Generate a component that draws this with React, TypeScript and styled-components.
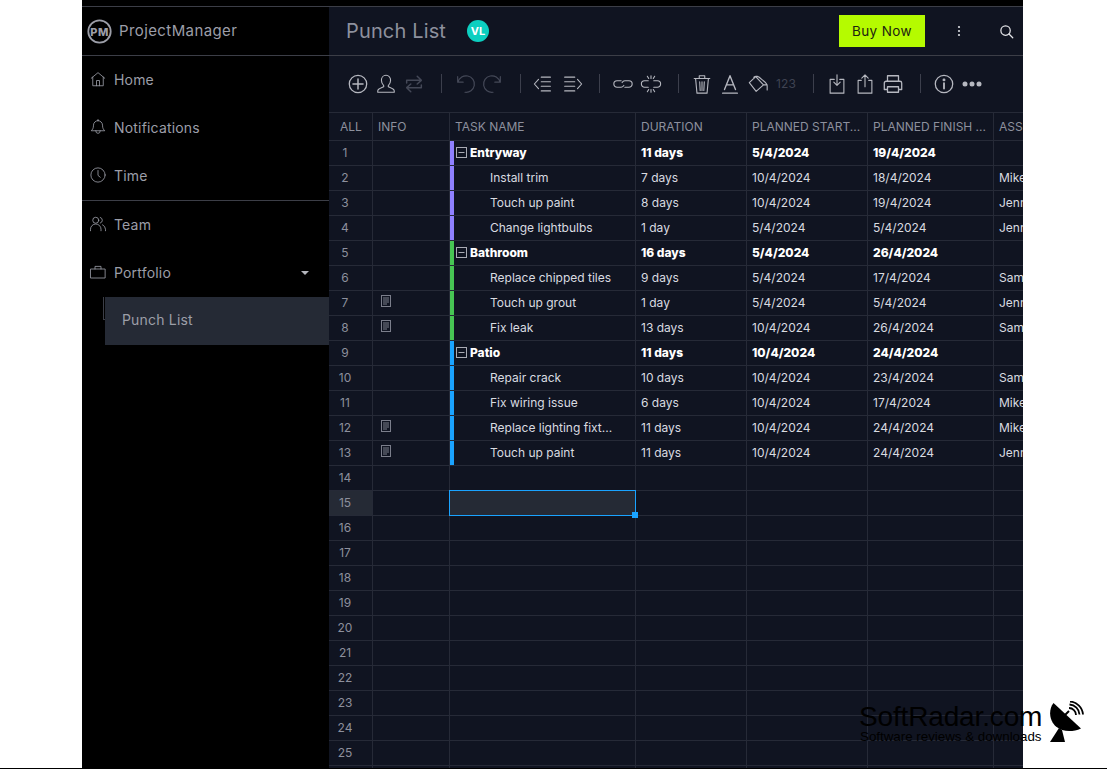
import React from "react";
import styled, { createGlobalStyle } from "styled-components";

const Global = createGlobalStyle`
  html, body { margin: 0; padding: 0; background: #fff; overflow: hidden; }
  body { font-family: Inter, "Liberation Sans", sans-serif; }
  #root { width: 1107px; height: 769px; }
`;

const Page = styled.div`
  position: relative;
  width: 1107px;
  height: 769px;
  overflow: hidden;
  background: #fff;
  border-bottom: 1px solid #000;
  box-sizing: border-box;
`;
const Frame = styled.div`
  margin-left: 82px;
  width: 941px;
  height: 768px;
  display: flex;
  flex-direction: column;
  background: #000;
  overflow: hidden;
`;
const TopBand = styled.div`
  height: 6px;
  flex: none;
  background: #000;
  border-bottom: 1px solid #3c3e47;
`;
const Body = styled.div`
  flex: 1;
  min-height: 0;
  display: flex;
`;
const Sidebar = styled.aside`
  width: 247px;
  flex: none;
  background: #000;
  color: #9c9ea8;
`;
const Brand = styled.div`
  height: 48px;
  box-sizing: content-box;
  border-bottom: 1px solid #3c3e47;
  display: flex;
  align-items: center;
  gap: 7px;
  padding-left: 5px;
  font-size: 15px;
  letter-spacing: 0.4px;
  color: #9c9ea8;
  & > span { margin-top: -1px; }
`;
const NavGroup = styled.nav`
  border-bottom: 1px solid #3c3e47;
`;
const NavItem = styled.div`
  height: 48px;
  box-sizing: border-box;
  display: flex;
  align-items: center;
  padding: 0 0 2px 7px;
  gap: 7px;
  font-size: 14px;
  letter-spacing: 0.18px;
  position: relative;
`;
const Caret = styled.span`
  position: absolute;
  left: 219px;
  top: 22px;
  width: 0;
  height: 0;
  border-left: 4px solid transparent;
  border-right: 4px solid transparent;
  border-top: 4px solid #b4b6bd;
`;
const SubWrap = styled.div`
  position: relative;
  height: 48px;
  box-sizing: border-box;
  margin-left: 23px;
  background: #252a35;
  display: flex;
  align-items: center;
  padding: 0 0 3px 17px;
  font-size: 14px;
  letter-spacing: 0.18px;
  color: #9c9ea8;
`;
const SubTree = styled.span`
  position: absolute;
  left: -2px;
  top: 0;
  width: 2px;
  height: 23px;
  border-left: 1px solid #3c3e47;
  border-bottom: 1px solid #3c3e47;
  box-sizing: border-box;
`;
const Main = styled.main`
  flex: 1;
  min-width: 0;
  background: #101421;
  display: flex;
  flex-direction: column;
`;
const Header = styled.header`
  height: 48px;
  flex: none;
  border-bottom: 1px solid #3c3e47;
  display: flex;
  align-items: center;
  padding-left: 17px;
`;
const Title = styled.h1`
  margin: 0;
  font-size: 20px;
  font-weight: 400;
  letter-spacing: 0.15px;
  color: #8d909d;
`;
const Avatar = styled.span`
  margin-left: 21px;
  width: 22px;
  height: 22px;
  border-radius: 50%;
  background: #0ccfc0;
  color: #fff;
  font-size: 11px;
  font-weight: 700;
  display: flex;
  align-items: center;
  justify-content: center;
`;
const BuyButton = styled.button`
  margin-left: auto;
  width: 86px;
  height: 32px;
  border: none;
  background: #b5fb00;
  color: #1d2410;
  font: 400 13.5px Inter, sans-serif;
  letter-spacing: 0.4px;
  padding: 0;
`;
const MenuSlot = styled.span`
  width: 68px;
  display: flex;
  justify-content: center;
  align-items: center;
`;
const SearchSlot = styled.span`
  width: 26px;
  margin-right: 4px;
  display: flex;
  justify-content: center;
  align-items: center;
`;
const Toolbar = styled.div`
  height: 56px;
  box-sizing: border-box;
  flex: none;
  display: flex;
  align-items: center;
  padding: 0 0 1px 15px;
`;
const Tool = styled.span`
  width: 28px;
  height: 28px;
  flex: none;
  display: flex;
  align-items: center;
  justify-content: center;
`;
const ToolText = styled(Tool)`
  font-size: 12px;
  color: #3f4352;
  letter-spacing: 0.2px;
`;
const Sep = styled.span`
  width: 1px;
  height: 19px;
  flex: none;
  background: #3c3f4c;
  margin: 0 9px 0 13px;
`;
const Grid = styled.div`
  flex: 1;
  min-height: 0;
  overflow: hidden;
  border-top: 1px solid #262a37;
`;
const Row = styled.div<{ $head?: boolean }>`
  display: grid;
  grid-template-columns: 44px 77px 186px 111px 121px 126px 29px;
  height: ${(p) => (p.$head ? 28 : 25)}px;
  box-sizing: border-box;
  border-bottom: 1px solid #262a37;
`;
const Cell = styled.div<{ $bold?: boolean }>`
  position: relative;
  border-right: 1px solid #262a37;
  display: flex;
  align-items: center;
  padding: 0 0 1px 5px;
  font-size: 12px;
  font-weight: ${(p) => (p.$bold ? 800 : 400)};
  color: ${(p) => (p.$bold ? "#ffffff" : "#d9dbe0")};
  white-space: nowrap;
  overflow: hidden;
  min-width: 0;
`;
const LastCell = styled(Cell)`
  border-right: none;
`;
const HeadCell = styled.div<{ $pad?: number; $last?: boolean }>`
  border-right: ${(p) => (p.$last ? "none" : "1px solid #262a37")};
  display: flex;
  align-items: center;
  padding-left: ${(p) => p.$pad ?? 5}px;
  font-size: 12px;
  color: #8d909d;
  white-space: nowrap;
  overflow: hidden;
`;
const NumCell = styled.div<{ $active?: boolean }>`
  border-right: 1px solid #262a37;
  display: flex;
  align-items: center;
  padding: 0 0 1px 6px;
  font-size: 12px;
  color: #8d909d;
  background: ${(p) => (p.$active ? "#252a35" : "transparent")};
`;
const NumText = styled.span`
  width: 20px;
  text-align: center;
`;
const InfoCell = styled(Cell)`
  padding: 0 0 5px 8px;
`;
const TaskCell = styled(Cell)<{ $child?: boolean }>`
  padding-left: ${(p) => (p.$child ? 40 : 6)}px;
  gap: 3px;
`;
const Bar = styled.span<{ $color: string }>`
  position: absolute;
  left: 0;
  top: 0;
  bottom: 0;
  width: 4px;
  background: ${(p) => p.$color};
`;
const Selected = styled.span`
  position: absolute;
  left: 449px;
  top: 490px;
  width: 187px;
  height: 26px;
  box-sizing: border-box;
  background: #252a35;
  border: 1px solid #1aa3ff;
  pointer-events: none;
`;
const Handle = styled.span`
  position: absolute;
  left: 632px;
  top: 512px;
  width: 6px;
  height: 6px;
  background: #1aa3ff;
`;
const Watermark = styled.div`
  position: absolute;
  left: 859px;
  top: 703px;
  color: #000;
  font-family: "Liberation Sans", Arial, sans-serif;
`;
const WmTitle = styled.div`
  font-size: 28px;
  line-height: 28px;
  letter-spacing: -0.15px;
`;
const WmSub = styled.div`
  font-size: 13.33px;
  line-height: 12px;
  margin-left: 1px;
`;
const WmIcon = styled.svg`
  position: absolute;
  left: 1049px;
  top: 701px;
`;

const S = (p: React.SVGProps<SVGSVGElement> & { s?: number }) => {
  const { s = 22, children, ...rest } = p;
  return (
    <svg width={s} height={s} viewBox="0 0 24 24" fill="none" stroke="currentColor" strokeWidth={1.2} strokeLinecap="round" strokeLinejoin="round" {...rest}>
      {children}
    </svg>
  );
};
const on = "#b6b8c0";
const off = "#444857";

const NavIcon = ({ children }: { children: React.ReactNode }) => (
  <S s={18} stroke="#9c9ea8" strokeWidth={1.1}>{children}</S>
);

const PmLogo = () => (
  <svg width="25" height="25" viewBox="0 0 25 25">
    <circle cx="12.5" cy="12.5" r="11.2" fill="none" stroke="#9c9ea8" strokeWidth="1.8" />
    <text x="12.5" y="16.5" textAnchor="middle" fontSize="11" fontWeight="800" fill="#9c9ea8" fontFamily="Inter, sans-serif">PM</text>
  </svg>
);

const NoteIcon = () => (
  <svg width="10" height="12" viewBox="0 0 10 12" fill="none" stroke="#7b7e8b" strokeWidth="1">
    <rect x="0.5" y="0.5" width="9" height="11" />
    <path d="M2 3h6M2 5h6M2 7h6M2 9h4" />
  </svg>
);
const Collapse = () => (
  <svg width="11" height="11" viewBox="0 0 11 11" fill="none" stroke="#a9abb4" strokeWidth="1" style={{ flex: "none" }}>
    <rect x="0.5" y="0.5" width="10" height="10" />
    <path d="M2.5 5.5h6" />
  </svg>
);

type T = { task: string; dur: string; start: string; end: string; who: string; bar: string; parent?: boolean; note?: boolean };
const P = "#8f80ff", G = "#47c553", B = "#1aa3ff";
const rows: T[] = [
  { task: "Entryway", dur: "11 days", start: "5/4/2024", end: "19/4/2024", who: "", bar: P, parent: true },
  { task: "Install trim", dur: "7 days", start: "10/4/2024", end: "18/4/2024", who: "Mike Smith", bar: P },
  { task: "Touch up paint", dur: "8 days", start: "10/4/2024", end: "19/4/2024", who: "Jennifer", bar: P },
  { task: "Change lightbulbs", dur: "1 day", start: "5/4/2024", end: "5/4/2024", who: "Jennifer", bar: P },
  { task: "Bathroom", dur: "16 days", start: "5/4/2024", end: "26/4/2024", who: "", bar: G, parent: true },
  { task: "Replace chipped tiles", dur: "9 days", start: "5/4/2024", end: "17/4/2024", who: "Sam", bar: G },
  { task: "Touch up grout", dur: "1 day", start: "5/4/2024", end: "5/4/2024", who: "Jennifer", bar: G, note: true },
  { task: "Fix leak", dur: "13 days", start: "10/4/2024", end: "26/4/2024", who: "Sam", bar: G, note: true },
  { task: "Patio", dur: "11 days", start: "10/4/2024", end: "24/4/2024", who: "", bar: B, parent: true },
  { task: "Repair crack", dur: "10 days", start: "10/4/2024", end: "23/4/2024", who: "Sam", bar: B },
  { task: "Fix wiring issue", dur: "6 days", start: "10/4/2024", end: "17/4/2024", who: "Mike Smith", bar: B },
  { task: "Replace lighting fixt...", dur: "11 days", start: "10/4/2024", end: "24/4/2024", who: "Mike Smith", bar: B, note: true },
  { task: "Touch up paint", dur: "11 days", start: "10/4/2024", end: "24/4/2024", who: "Jennifer", bar: B, note: true },
];
const blank = Array.from({ length: 13 }, (_, i) => i + 14);

export default function App() {
  return (
    <Page>
      <Global />
      <Frame>
        <TopBand />
        <Body>
          <Sidebar>
            <Brand><PmLogo /><span>ProjectManager</span></Brand>
            <NavGroup>
              <NavItem>
                <NavIcon><path d="M3 11 12 3.500 21 11M5 9.500V21h14V9.500M10 21v-7h4v7" /></NavIcon>Home
              </NavItem>
              <NavItem>
                <NavIcon><path d="M12 3.500a6 6 0 0 0-6 6c0 4.500-1.500 6-3 7.500h18c-1.500-1.500-3-3-3-7.500a6 6 0 0 0-6-6ZM9 17a3 3.500 0 0 0 6 0M12 3.500V2" /></NavIcon>Notifications
              </NavItem>
              <NavItem>
                <NavIcon><circle cx="12" cy="12" r="9.500" /><path d="M12 6v6.500l3 2.500" /></NavIcon>Time
              </NavItem>
            </NavGroup>
            <NavItem>
              <NavIcon><circle cx="9" cy="7" r="4" /><path d="M2 21v-2a7 7 0 0 1 14 0v2M15 3.200a4 4 0 0 1 0 7.600M18 13a7 7 0 0 1 4 6v2" /></NavIcon>Team
            </NavItem>
            <NavItem>
              <NavIcon><rect x="2.500" y="8" width="19" height="12" /><path d="M8 8V4.500h8V8" /></NavIcon>Portfolio
              <Caret />
            </NavItem>
            <SubWrap><SubTree />Punch List</SubWrap>
          </Sidebar>
          <Main>
            <Header>
              <Title>Punch List</Title>
              <Avatar>VL</Avatar>
              <BuyButton>Buy Now</BuyButton>
              <MenuSlot>
                <svg width="4" height="12" viewBox="0 0 4 12" fill="#d9dbe0"><circle cx="2" cy="2" r="1.100" /><circle cx="2" cy="6" r="1.100" /><circle cx="2" cy="10" r="1.100" /></svg>
              </MenuSlot>
              <SearchSlot>
                <S s={15} stroke="#e4e5e9" strokeWidth={2}><circle cx="10.500" cy="10.500" r="7.500" /><path d="m16 16 6 6" /></S>
              </SearchSlot>
            </Header>
            <Toolbar>
              <Tool><S stroke={on}><circle cx="12" cy="12" r="9.500" strokeWidth={1.4} /><path d="M12 6.500v11M6.500 12h11" strokeWidth={1.6} /></S></Tool>
              <Tool><S stroke={on}><path d="M12 2.500c-3 0-5 2.400-5 5.500 0 2.500 1.200 4.500 2.500 5.700V15c-2.500 1.200-6.500 2-6.500 4.500V21h18v-1.500C21 17 17 16.200 14.500 15v-1.300C15.800 12.500 17 10.500 17 8c0-3.100-2-5.500-5-5.500Z" /></S></Tool>
              <Tool><S stroke={off} strokeWidth={1.6}><path d="M4 11V8h15M15.500 3.500 20 8l-4.500 4M20 13v3H5M8.500 20.500 4 16l4.500-4" /></S></Tool>
              <Sep />
              <Tool><S stroke={off} strokeWidth={1.3}><path d="M4 4v6h6M4.500 10A9 9 0 1 1 12 21" /></S></Tool>
              <Tool><S stroke={off} strokeWidth={1.3}><path d="M20 4v6h-6M19.500 10A9 9 0 1 0 12 21" /></S></Tool>
              <Sep />
              <Tool><S stroke={on}><path d="M6 7 1.500 12 6 17M9 4.500h10M9 9.500h10M9 14.500h10M9 19.500h10" /></S></Tool>
              <Tool><S stroke={on}><path d="M18 7l4.500 5-4.500 5M4 4.500h11M4 9.500h11M4 14.500h11M4 19.500h11" /></S></Tool>
              <Sep />
              <Tool><S stroke={on}><path d="M10 8.500H5.500a3.500 3.500 0 0 0 0 7H10a3.500 3.500 0 0 0 3-2M14 15.500h4.500a3.500 3.500 0 0 0 0-7H14a3.500 3.500 0 0 0-3 2" /></S></Tool>
              <Tool><S stroke={on}><path d="M9 8.500H5a3.500 3.500 0 0 0 0 7h4M15 8.500h4a3.500 3.500 0 0 1 0 7h-4M12 3v3M8 3.500l1.500 2.500M16 3.500 14.500 6M12 18v3M8 20.500 9.500 18M16 20.500 14.500 18" /></S></Tool>
              <Sep />
              <Tool><S stroke={on}><path d="M3.500 6h17M9 6V3h6v3M5 6l1.500 16h11L19 6M9.500 9.500 10 19M12 9.500V19M14.500 9.500 14 19" /></S></Tool>
              <Tool><S stroke={on} strokeWidth={1.5}><path d="M6 18 12 3l6 15M8 13h8M4 22h16" /></S></Tool>
              <Tool><S stroke={on}><path d="M9.500 4 2.500 10.500 10 20l8-7-8.500-9ZM7.500 6V4.500c2-2 5-1 8.500 2.500 3 2.500 6 4 6 7v4.500M18 13h4" /></S></Tool>
              <ToolText>123</ToolText>
              <Sep />
              <Tool><S stroke={on}><path d="M8 7H3.500v15h15V7H14M11 2v11M7.500 10l3.500 3.500 3.500-3.500" transform="translate(1 0)" /></S></Tool>
              <Tool><S stroke={on}><path d="M8 8H4.500v14h15V8H16M12 15V2M8.500 5.500 12 2l3.500 3.500" /></S></Tool>
              <Tool><S stroke={on} strokeWidth={1.4}><path d="M6 9V3h12v6M6 18H2.500v-7a2 2 0 0 1 2-2h15a2 2 0 0 1 2 2v7H18M6 15h12v6H6z" /></S></Tool>
              <Sep />
              <Tool><S stroke={on}><circle cx="12" cy="12" r="9.500" strokeWidth={1.4} /><path d="M12 11v6" strokeWidth={2} /><circle cx="12" cy="7.500" r="1" fill={on} /></S></Tool>
              <Tool>
                <svg width="20" height="6" viewBox="0 0 20 6" fill={on}><circle cx="3" cy="3" r="2.500" /><circle cx="10" cy="3" r="2.500" /><circle cx="17" cy="3" r="2.500" /></svg>
              </Tool>
            </Toolbar>
            <Grid>
              <Row $head>
                <HeadCell $pad={11}>ALL</HeadCell>
                <HeadCell>INFO</HeadCell>
                <HeadCell>TASK NAME</HeadCell>
                <HeadCell>DURATION</HeadCell>
                <HeadCell>PLANNED START...</HeadCell>
                <HeadCell>PLANNED FINISH ...</HeadCell>
                <HeadCell $last>ASSIGNED</HeadCell>
              </Row>
              {rows.map((r, i) => (
                <Row key={i}>
                  <NumCell><NumText>{i + 1}</NumText></NumCell>
                  <InfoCell>{r.note && <NoteIcon />}</InfoCell>
                  <TaskCell $bold={r.parent} $child={!r.parent}>
                    <Bar $color={r.bar} />
                    {r.parent && <Collapse />}
                    {r.task}
                  </TaskCell>
                  <Cell $bold={r.parent}>{r.dur}</Cell>
                  <Cell $bold={r.parent}>{r.start}</Cell>
                  <Cell $bold={r.parent}>{r.end}</Cell>
                  <LastCell>{r.who}</LastCell>
                </Row>
              ))}
              {blank.map((n) => (
                <Row key={n}>
                  <NumCell $active={n === 15}><NumText>{n}</NumText></NumCell>
                  <Cell /><Cell /><Cell /><Cell /><Cell /><LastCell />
                </Row>
              ))}
            </Grid>
          </Main>
        </Body>
      </Frame>
      <Selected />
      <Handle />
      <Watermark>
        <WmTitle>SoftRadar.com</WmTitle>
        <WmSub>Software reviews &amp; downloads</WmSub>
      </Watermark>
      <WmIcon width="36" height="42" viewBox="0 0 36 42">
        <path d="M4.500 2C-1 9 .500 20 7 25.500c6.500 5.500 16 6 25 2L4.500 2Z" fill="#000" />
        <path d="M10 27 1 41h15l-3-12Z" fill="#000" />
        <path d="M15 15l5-5" stroke="#000" strokeWidth="2" />
        <g fill="none" stroke="#000" strokeWidth="1.800">
          <path d="M20 7a7 7 0 0 1 7 7" />
          <path d="M20.500 3.500a10.500 10.500 0 0 1 10 10" />
          <path d="M21 0.500a14 14 0 0 1 13 13" />
        </g>
      </WmIcon>
    </Page>
  );
}
